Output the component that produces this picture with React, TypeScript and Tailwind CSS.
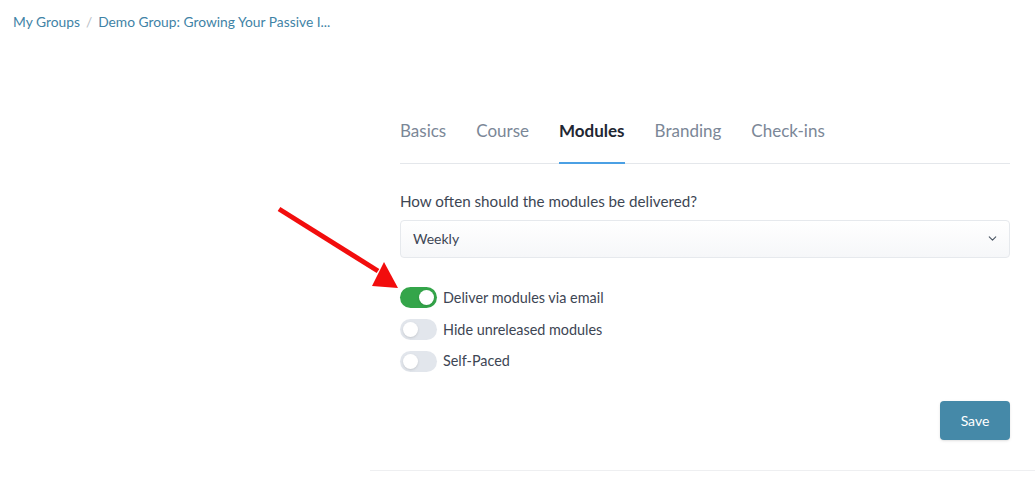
import { ChevronDown } from "lucide-react";

const tabs = ["Basics", "Course", "Modules", "Branding", "Check-ins"];

function Toggle({ on }: { on?: boolean }) {
  return (
    <div
      className={`relative h-[21px] w-[37px] rounded-full ${on ? "bg-[#34a54a]" : "bg-[#e2e6ec]"}`}
    >
      <div
        className={`absolute top-[3px] h-[15px] w-[15px] rounded-full bg-white shadow-sm ${on ? "left-[19px]" : "left-[3px]"}`}
      />
    </div>
  );
}

export default function App() {
  const options = [
    { label: "Deliver modules via email", on: true },
    { label: "Hide unreleased modules", on: false },
    { label: "Self-Paced", on: false },
  ];

  return (
    <div
      className="relative h-[481px] w-[1035px] overflow-hidden bg-white"
      style={{ fontFamily: '"Source Sans Pro", Lato, "Noto Sans", sans-serif' }}
    >
      {/* Breadcrumb */}
      <div className="flex items-center gap-[6px] pl-[13px] pt-[12px] text-[13.8px] text-[#3f83a6]">
        <span>My Groups</span>
        <span className="text-[#b8bec6]">/</span>
        <span>Demo Group: Growing Your Passive I...</span>
      </div>

      {/* Settings panel */}
      <div className="ml-[370px] mt-[77px] border-b border-[#eeeff1] pb-[30px] pl-[30px] pr-[25px]">
        <div className="flex gap-[30px] border-b border-[#e4e7eb]">
          {tabs.map((t) => (
            <div
              key={t}
              className={`pb-[19px] pt-[8px] text-[17px] ${
                t === "Modules"
                  ? "-mb-px border-b-2 border-[#4ba0e4] font-bold text-[#1f2733]"
                  : "text-[#7b8797]"
              }`}
            >
              {t}
            </div>
          ))}
        </div>

        <div className="mt-[26px] text-[15.2px] text-[#3d4654]">How often should the modules be delivered?</div>

        <div className="mt-[7px] flex h-[38px] items-center justify-between rounded-[4px] border border-[#e6e9ed] bg-gradient-to-b from-white to-[#f6f7f9] pl-[12px] pr-[10px] text-[14px] text-[#3d4654]">
          <span>Weekly</span>
          <ChevronDown size={13} strokeWidth={2} className="text-[#4a5563]" />
        </div>

        <div className="mt-[29px] flex flex-col gap-[10px]">
          {options.map((o) => (
            <div key={o.label} className="flex items-center gap-[6px] text-[14.4px] text-[#3d4654]">
              <Toggle on={o.on} />
              <span>{o.label}</span>
            </div>
          ))}
        </div>

        <div className="mt-[29px] flex justify-end">
          <button className="h-[39px] w-[70px] rounded-[4px] bg-[#4589a8] text-[14px] text-white shadow-sm">
            Save
          </button>
        </div>
      </div>

      {/* Red annotation arrow */}
      <svg className="absolute left-0 top-0" width="1035" height="481" viewBox="0 0 1035 481">
        <line x1="279" y1="209" x2="378" y2="271" stroke="#f20d0d" strokeWidth="5" />
        <polygon points="398,288 372,286 384,262" fill="#f20d0d" />
      </svg>
    </div>
  );
}
